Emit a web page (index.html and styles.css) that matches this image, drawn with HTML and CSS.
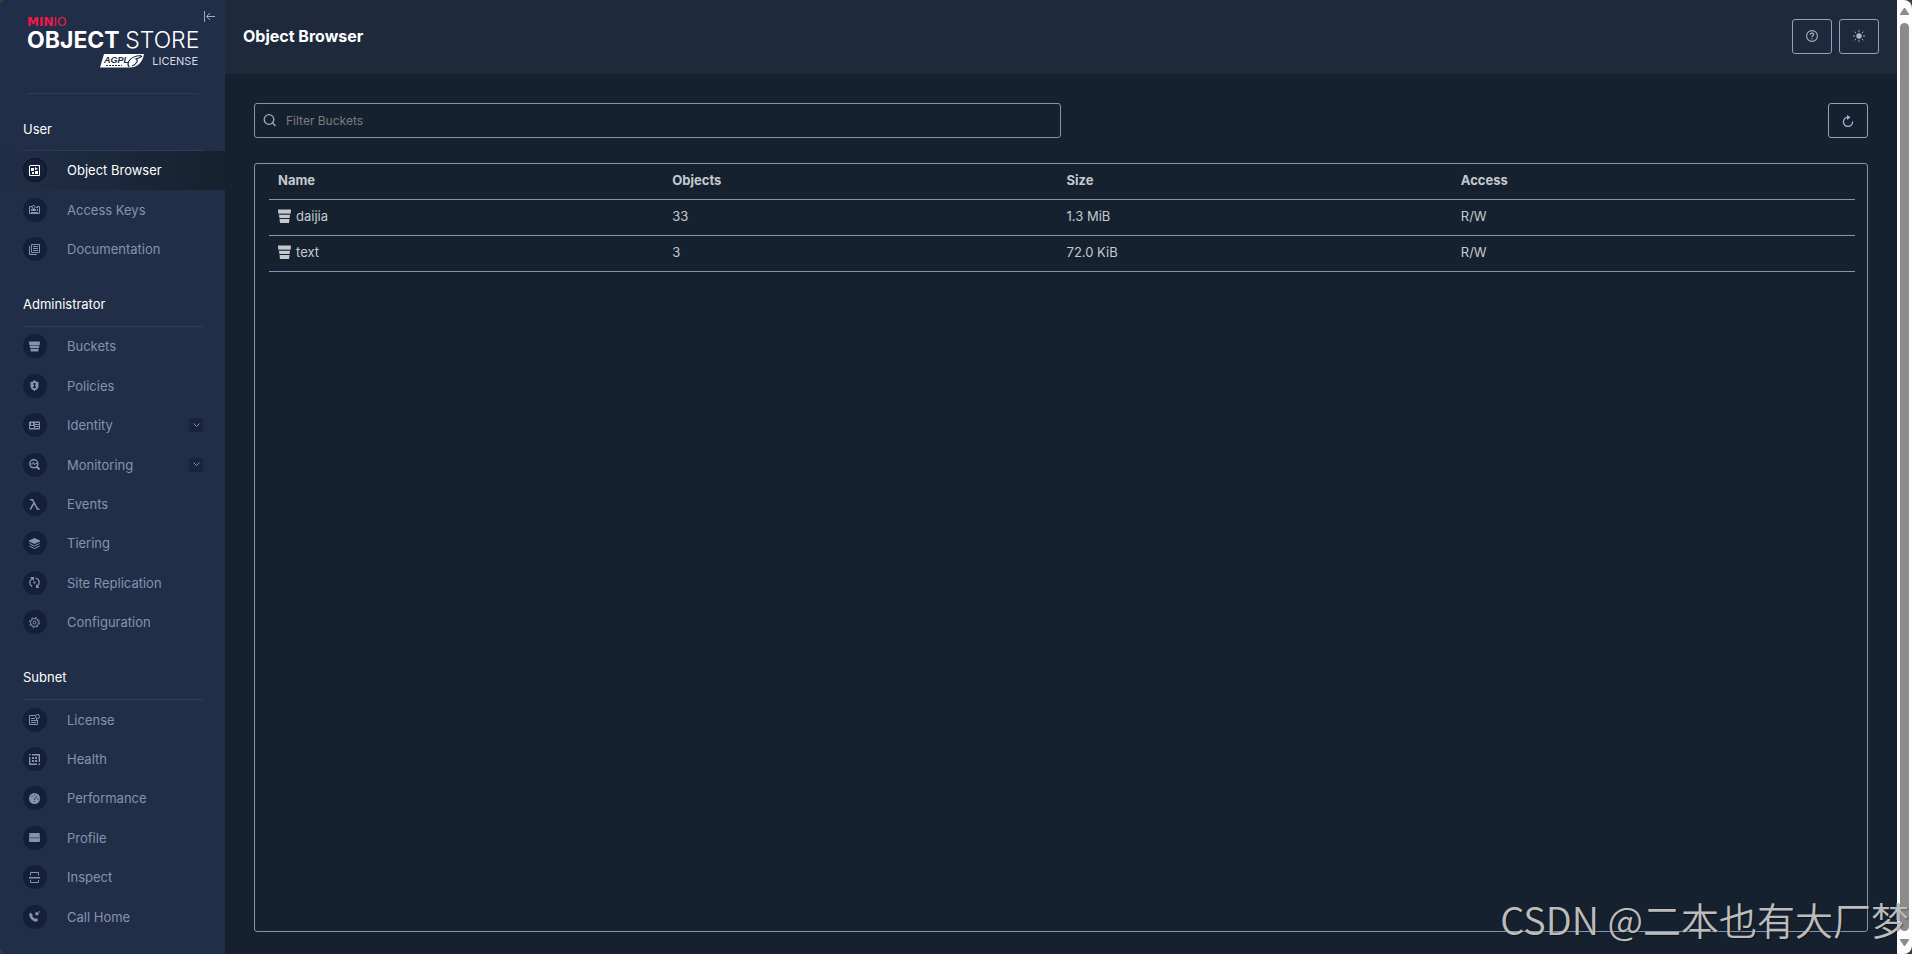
FILE: index.html
```html
<!DOCTYPE html>
<html lang="en">
<head>
  <meta charset="UTF-8">
  <meta name="viewport" content="width=device-width, initial-scale=1.0">
  <title>MinIO Console</title>
  <link rel="stylesheet" href="styles.css">
</head>
<body>
  <div class="app">
    <aside class="sidebar">
      <div class="brand">
        <div class="logo">
          <span class="logo-minio">MIN<span>IO</span></span>
          <span class="logo-name">OBJECT <span>STORE</span></span>
          <span class="logo-license">
            <svg width="44" height="14" viewBox="0 0 44 14">
              <path d="M4 0H44Q43 7 38 11Q34 14 28 13.500H0Z" fill="#fff"/>
              <text class="logo-agpl" x="4" y="9">AGPL</text>
              <path d="M6 11.500H22" stroke="#202d47" stroke-dasharray="2 1"/>
              <path d="M41 1.500Q32 2 29 7Q27 10 29 13M42 2Q40 4 36 5Q38 6 37 8Q35 11 32 12" fill="none" stroke="#202d47" stroke-width="1.200"/>
            </svg>
            LICENSE
          </span>
        </div>
        <button class="collapse" aria-label="Collapse menu">
          <svg width="11" height="11" viewBox="0 0 11 11" fill="none" stroke="currentColor"><path d="M.5 0V11M3 5.500H11M6 2L2.500 5.500L6 9"/></svg>
        </button>
      </div>
      <nav>
        <h2>User</h2>
        <ul>
          <li><a class="active" href="#">
            <i><svg viewBox="0 0 11 11"><path d="M1 .5H10.500V10.500H.5V1Z" fill="none" stroke="currentColor"/><path d="M2 3h3v3H2zM6 2l3 2-3 1zM3 7h2v2H3zM6 6h3v3H6z"/></svg></i>
            Object Browser</a></li>
          <li><a href="#">
            <i><svg viewBox="0 0 11 11"><path d="M3 2.500H.5V9.500H10.500V2.500H8M2 8.500H9" fill="none" stroke="currentColor"/><circle cx="4.500" cy="3" r="1.500" fill="none" stroke="currentColor"/><path d="M2 5h5v2H2zM7 3h2v1H7zM8 5h1v2H8z"/></svg></i>
            Access Keys</a></li>
          <li><a href="#">
            <i><svg viewBox="0 0 11 11" fill="none" stroke="currentColor"><path d="M2.500 .5H10.500V8.500H2.500ZM.5 2V10.500H8M4 2.500H9M4 4.500H9M4 6.500H9"/></svg></i>
            Documentation</a></li>
        </ul>
        <h2>Administrator</h2>
        <ul>
          <li><a href="#">
            <i><svg viewBox="0 0 11 11"><path d="M0 .5H11L10.700 4H.3ZM.7 4.500H10.300L10 7H1ZM1.300 7.700H9.700L9.300 10.500H1.700Z"/></svg></i>
            Buckets</a></li>
          <li><a href="#">
            <i><svg viewBox="0 0 11 11"><path fill-rule="evenodd" d="M5.500 0L7 1.500L9.500 2V7Q9 9.500 5.500 11Q2 9.500 1.500 7V2L4 1.500ZM4.500 3V5H5V6.500H4V8H7V6.500H6V5H6.500V3Z"/></svg></i>
            Policies</a></li>
          <li><a href="#">
            <i><svg viewBox="0 0 11 11"><path fill-rule="evenodd" d="M1 1.500H10Q11 1.500 11 2.500V8.500Q11 9.500 10 9.500H1Q0 9.500 0 8.500V2.500Q0 1.500 1 1.500ZM2 3V5H4V3ZM1 6V8H5V6ZM6 3V4H10V3ZM6 5V6H10V5ZM6 7V8H10V7Z"/></svg></i>
            Identity
            <span class="arrow"><svg width="7" height="5" viewBox="0 0 7 5" fill="none" stroke="currentColor"><path d="M.5 .5L3.500 3.500L6.500 .5"/></svg></span></a></li>
          <li><a href="#">
            <i><svg viewBox="0 0 11 11" fill="none" stroke="currentColor"><circle cx="4.800" cy="4.800" r="4" stroke-width="1.500"/><path d="M2 5H3.500L4.500 3L5.500 6L6.500 4.500H8"/><path d="M7.500 7.500L10.500 10.500" stroke-width="2"/></svg></i>
            Monitoring
            <span class="arrow"><svg width="7" height="5" viewBox="0 0 7 5" fill="none" stroke="currentColor"><path d="M.5 .5L3.500 3.500L6.500 .5"/></svg></span></a></li>
          <li><a href="#">
            <i><svg viewBox="0 0 11 11" fill="none" stroke="currentColor" stroke-width="1.500"><path d="M1 .7H3.500L8.500 10.200H10.500M5 4L1.200 10.500"/></svg></i>
            Events</a></li>
          <li><a href="#">
            <i><svg viewBox="0 0 11 11"><path d="M5.500 0L11 2.500V3.500L5.500 6L0 3.500V2.500Z"/><path d="M.3 5.500L5.500 8L10.700 5.500M.3 8L5.500 10.500L10.700 8" fill="none" stroke="currentColor"/></svg></i>
            Tiering</a></li>
          <li><a href="#">
            <i><svg viewBox="0 0 11 11"><path d="M3.500 1.500Q.5 3 .8 6Q1 8 3 9.500M6.500 1Q10 2 10.200 5Q10.300 8 8 9.500" fill="none" stroke="currentColor" stroke-width="1.300"/><path d="M1 0H5V4ZM7 7V11H10.500ZM4.500 4.500h2v2h-2z"/></svg></i>
            Site Replication</a></li>
          <li><a href="#">
            <i><svg viewBox="0 0 11 11" fill="none" stroke="currentColor"><circle cx="5.500" cy="5.500" r="4"/><circle cx="5.500" cy="5.500" r="1.500"/><circle cx="5.500" cy="5.500" r="5" stroke-dasharray="2 1.930"/></svg></i>
            Configuration</a></li>
        </ul>
        <h2>Subnet</h2>
        <ul>
          <li><a href="#">
            <i><svg viewBox="0 0 11 11" fill="none" stroke="currentColor"><path d="M6 1.500H.5V10.500H8.500V6M2 4.500H6M2 6.500H7M2 8.500H7"/><circle cx="8.500" cy="2.500" r="2"/><path d="M7.500 4.500V7"/></svg></i>
            License</a></li>
          <li><a href="#">
            <i><svg viewBox="0 0 11 11"><path d="M3 .7H10.300V8M.7 3V10.300H8" fill="none" stroke="currentColor" stroke-width="1.400"/><path d="M0 0h1.500v1.500H0zM9.500 9.500H11V11H9.500zM3 3h2v2H3zM6 3h2v2H6zM3 6h2v2H3zM6 6h2v2H6z"/></svg></i>
            Health</a></li>
          <li><a href="#">
            <i><svg viewBox="0 0 11 11"><circle cx="5.500" cy="5.500" r="5.500"/><path d="M5 7L8 3M2.500 3.500h1M5 2h1M8 6h1.500M5 8.500h1" stroke="#141f38" stroke-width=".8"/></svg></i>
            Performance</a></li>
          <li><a href="#">
            <i><svg viewBox="0 0 11 11"><path d="M.5 1H10.500L11 5.500H0ZM0 6.300H11V9Q11 10 10 10H1Q0 10 0 9Z"/><path d="M0 6H11" stroke="currentColor" opacity=".5"/></svg></i>
            Profile</a></li>
          <li><a href="#">
            <i><svg viewBox="0 0 11 11" fill="none" stroke="currentColor"><path d="M1.500 3.500V.5H9.500V3.500M1.500 8V10.500H9.500V8"/><path d="M0 5.700H11" stroke-width="1.400"/></svg></i>
            Inspect</a></li>
          <li><a href="#">
            <i><svg viewBox="0 0 11 11"><path d="M1.500 1.500L3.800 4L3.200 5.500L5.700 7.800L7 7L9.300 9L7.500 10.700Q5.500 11 2.500 8.500Q0 5.500 .2 3Z"/><circle cx="8" cy="2.700" r="1.800"/><path d="M9 0L11 .5V2Z"/></svg></i>
            Call Home</a></li>
        </ul>
      </nav>
    </aside>

    <main>
      <header class="page-header">
        <h1>Object Browser</h1>
        <div class="actions">
          <button class="btn" aria-label="Help">
            <svg width="12" height="12" viewBox="0 0 12 12" fill="none" stroke="currentColor"><circle cx="6" cy="6" r="5.400" stroke-width="1.100"/><path d="M4.300 4.700Q4.300 3.100 6 3.100Q7.700 3.100 7.700 4.500Q7.700 5.300 6.700 5.800Q6 6.200 6 7.200M6 8.200V9.300" stroke-width="1.200"/></svg>
          </button>
          <button class="btn" aria-label="Light mode">
            <svg width="12" height="12" viewBox="0 0 12 12"><circle cx="6" cy="6" r="2.700"/><path d="M6 0V1.800M6 10.200V12M0 6H1.800M10.200 6H12M1.700 1.700L3 3M9 9L10.300 10.300M10.300 1.700L9 3M3 9L1.700 10.300" stroke="currentColor"/></svg>
          </button>
        </div>
      </header>

      <div class="content">
        <div class="toolbar">
          <label class="search">
            <svg width="13" height="13" viewBox="0 0 13 13" fill="none" stroke="currentColor" stroke-width="1.300"><circle cx="6" cy="5.500" r="4.800"/><path d="M9.500 9L12.500 12"/></svg>
            <input type="text" placeholder="Filter Buckets" aria-label="Filter Buckets">
          </label>
          <button class="btn" aria-label="Refresh">
            <svg width="12" height="12" viewBox="0 0 12 12"><path d="M6 2.200A4.600 4.600 0 1 0 10.600 6.500" fill="none" stroke="currentColor" stroke-width="1.300"/><path d="M5 0L8.500 2.300L5 5Z"/></svg>
          </button>
        </div>

        <div class="table-box">
          <table>
            <thead>
              <tr><th>Name</th><th>Objects</th><th>Size</th><th>Access</th></tr>
            </thead>
            <tbody>
              <tr>
                <td><div class="bucket"><svg width="13" height="14" viewBox="0 0 13 14"><path d="M0 .5H13L12.700 4.500H.3ZM1 6H12L11.600 9H1.400ZM1.500 10H11.500L11 14H2Z"/><path d="M.5 5H12.500" stroke="currentColor" opacity=".5"/></svg>daijia</div></td>
                <td>33</td><td>1.3 MiB</td><td>R/W</td>
              </tr>
              <tr>
                <td><div class="bucket"><svg width="13" height="14" viewBox="0 0 13 14"><path d="M0 .5H13L12.700 4.500H.3ZM1 6H12L11.600 9H1.400ZM1.500 10H11.500L11 14H2Z"/><path d="M.5 5H12.500" stroke="currentColor" opacity=".5"/></svg>text</div></td>
                <td>3</td><td>72.0 KiB</td><td>R/W</td>
              </tr>
            </tbody>
          </table>
        </div>
      </div>
    </main>

    <div class="scrollbar">
      <svg width="9" height="7" viewBox="0 0 9 7"><path d="M4 0H5L9 6V7H0V6Z"/></svg>
      <div class="thumb"></div>
      <svg width="9" height="7" viewBox="0 0 9 7"><path d="M4 7H5L9 1V0H0V1Z"/></svg>
    </div>
  </div>
  <div class="watermark">CSDN @二本也有大厂梦</div>
</body>
</html>
```
FILE: styles.css
```css
* {margin: 0; padding: 0; box-sizing: border-box;}

ul, li {
  list-style: none;
}
body {
  background-color: #3a3a3a;
  font-family: Inter, "Liberation Sans", sans-serif;
  font-size: 13px;
  overflow: hidden;
}
button {
  background: none;
  border: 0;
  cursor: pointer;
}
svg {
  display: block;
  fill: currentColor;
  flex-shrink: 0;
}
svg[fill="none"] {
  fill: none;
}
.app {
  display: flex;
  min-height: 100vh;
  border-radius: 8px;
  overflow: hidden;
  background-color: #16212f;
}

/* sidebar */
.sidebar {
  display: flex;
  flex-direction: column;
  width: 225px;
  flex-shrink: 0;
  padding-bottom: 17px;
  background-color: #212e47;
  color: #8593b3;
}
.brand {
  display: flex;
  justify-content: space-between;
  height: 94px;
  padding: 10px 10px 0 27px;
}
.logo {
  display: flex;
  flex-direction: column;
  width: 171px;
  padding-top: 6px;
  border-bottom: 1px solid #2d3b55;
  color: #fff;
}
.logo-minio {
  font: bold 12px/12px "DejaVu Sans", sans-serif;
  color: #f5174a;
}
.logo-minio span {
  font-weight: normal;
}
.logo-name {
  font-size: 23px;
  line-height: 25px;
  font-weight: 700;
  white-space: nowrap;
}
.logo-name span {
  font-weight: 300;
}
.logo-license {
  display: flex;
  justify-content: flex-end;
  align-items: center;
  gap: 8px;
  font-size: 11px;
  line-height: 16px;
  color: #d5dae5;
}
.logo-agpl {
  font: italic bold 9px "Liberation Sans", sans-serif;
  fill: #202d47;
}
.collapse {
  align-self: flex-start;
  padding-top: 1px;
  color: #a3aabb;
}
nav {
  flex: 1;
  display: flex;
  flex-direction: column;
}
nav h2 {
  height: 57px;
  flex-shrink: 0;
  margin: 0 22px 0 23px;
  padding-top: 25px;
  border-bottom: 1px solid #2f3d58;
  color: #fff;
  font-size: 13px;
  line-height: 20px;
  font-weight: 400;
}
nav h2:not(:first-child) {
  height: 58px;
}
/* the items share the height that the headings leave */
nav ul {
  display: contents;
}
nav li {
  display: flex;
  flex: 1 0 38px;
}
nav a {
  flex: 1;
  display: flex;
  align-items: center;
  padding: 0 22px 1px 23px;
  color: inherit;
  text-decoration: none;
}
nav a.active {
  background: linear-gradient(90deg, #212e47, #16212f);
  color: #fff;
}
nav i {
  display: flex;
  align-items: center;
  width: 24px;
  height: 24px;
  margin-right: 20px;
  padding-left: 6px;
  border-radius: 50%;
  background-color: #141f38;
}
nav .active i {
  box-shadow: inset 0 0 0 1px #0d1626;
}
nav i svg {
  width: 11px;
  height: 11px;
}
.arrow {
  display: flex;
  align-items: center;
  justify-content: center;
  width: 14px;
  height: 14px;
  margin-left: auto;
  border-radius: 2px;
  background-color: #18233f;
}

/* main */
main {
  flex: 1;
  display: flex;
  flex-direction: column;
}
.page-header {
  display: flex;
  align-items: center;
  justify-content: space-between;
  height: 74px;
  padding: 0 18px 2px;
  background-color: #1e2a3c;
}
h1 {
  font-size: 16px;
  font-weight: 700;
  color: #fff;
}
.actions {
  display: flex;
  gap: 7px;
}
.btn {
  display: flex;
  align-items: center;
  justify-content: center;
  width: 40px;
  height: 35px;
  border: 1px solid #8fa0c4;
  border-radius: 3px;
  color: #a5b4d4;
}
.content {
  flex: 1;
  display: flex;
  flex-direction: column;
  gap: 25px;
  padding: 29px 29px 22px;
}
.toolbar {
  display: flex;
  justify-content: space-between;
}
.search {
  display: flex;
  align-items: center;
  gap: 10px;
  width: 50%;
  height: 35px;
  padding: 0 8px;
  border: 1px solid #8593ad;
  border-radius: 3px;
  color: #a0acc8;
}
.search input {
  flex: 1;
  border: 0;
  outline: 0;
  background: none;
  color: #c4c9d0;
  font: 12px Inter, sans-serif;
}
.search input::placeholder {
  color: #7c7c7c;
}
.table-box {
  flex: 1;
  padding: 0 12px 0 14px;
  border: 1px solid #8593ad;
  border-radius: 3px;
}
table {
  width: 100%;
  table-layout: fixed;
  border-spacing: 0;
  color: #c4c9d0;
}
th, td {
  height: 36px;
  padding: 0 9px 3px;
  border-bottom: 1px solid #8593ad;
  text-align: left;
}
th {
  width: 24.86%;
  font-weight: 700;
}
th:last-child {
  width: auto;
}
.bucket {
  display: flex;
  align-items: center;
  gap: 5px;
}

.scrollbar {
  display: flex;
  flex-direction: column;
  align-items: center;
  gap: 8px;
  width: 15px;
  padding: 8px 0;
  background-color: #fcfcfc;
  color: #8b8b8b;
}
.thumb {
  flex: 1;
  width: 9px;
  border-radius: 5px;
  background-color: #8b8b8b;
}
.watermark {
  position: absolute;
  right: 3px;
  bottom: 8px;
  color: #bcbcbc;
  font: 350 38px/54px "Noto Sans CJK SC", sans-serif;
  text-shadow: 1px 1px 1px rgba(0, 0, 0, 0.4);
  white-space: nowrap;
}
```
